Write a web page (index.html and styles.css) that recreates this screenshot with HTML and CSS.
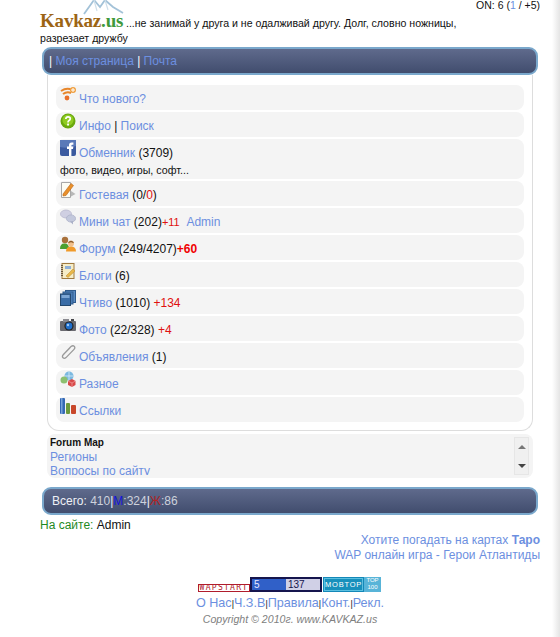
FILE: index.html
```html
<!DOCTYPE html>
<html lang="ru">
<head>
  <meta charset="UTF-8" />
  <title>Kavkaz.us</title>
  <link rel="stylesheet" href="styles.css">
</head>
<body>

  <div class="online-top">ON: 6 (<a href="#">1</a> / +5)</div>

  <div class="quote">
    <span class="logo">
      <svg class="logo-peaks" width="42" height="16" viewBox="0 0 42 16">
        <path d="M1 15 L11 1 L17 8 L22 1 L30 8 L40 14" fill="none" stroke="#a3c2d8" stroke-width="1.8"/>
        <path d="M11 1 L14 12 M22 1 L25 11" fill="none" stroke="#cfdfea" stroke-width="1.2"/>
      </svg>
      <span class="logo-name">Kavkaz</span><span class="logo-zone">.us</span>
    </span>
    ...не занимай у друга и не одалживай другу. Долг, словно ножницы,<br>
    разрезает дружбу
  </div>

  <div class="head-bar">| <a href="#">Моя страница</a> | <a href="#">Почта</a></div>

  <div class="menu-box">
    <div class="menu-row">
      <svg class="icon" viewBox="0 0 16 16">
        <path d="M1 5 Q7 1 12 4" fill="none" stroke="#e8862a" stroke-width="2"/>
        <path d="M3 8 Q7 5 11 7" fill="none" stroke="#e8862a" stroke-width="2"/>
        <circle cx="7" cy="12" r="2.4" fill="#e8702a"/>
        <circle cx="13" cy="4" r="3" fill="#f0a040"/>
        <path d="M11 4 H15 M13 2 V6" stroke="#fff" stroke-width="1"/>
      </svg>
      <a href="#">Что нового?</a>
    </div>
    <div class="menu-row">
      <svg class="icon" viewBox="0 0 16 16">
        <circle cx="8" cy="8" r="7.5" fill="#6aa80e"/>
        <circle cx="8" cy="7" r="5.6" fill="#8fcb22"/>
        <path d="M5.8 6 Q6 3.8 8 3.8 Q10.3 3.8 10.3 5.8 Q10.3 7 8.8 7.7 Q8 8.2 8 9.4" fill="none" stroke="#fff" stroke-width="1.7"/>
        <rect x="7.1" y="10.6" width="1.9" height="1.9" fill="#fff"/>
      </svg>
      <a href="#">Инфо</a> | <a href="#">Поиск</a>
    </div>
    <div class="menu-row">
      <svg class="icon" viewBox="0 0 16 16">
        <rect width="16" height="16" rx="2" fill="#3b5a9f"/>
        <path d="M0 0 H16 V6 Q8 9 0 7 Z" fill="#5a79b8"/>
        <path d="M9 16 V9 H7 V6.6 H9 V5 Q9 2.4 11.6 2.4 H13.4 V4.8 H12.2 Q11.4 4.8 11.4 5.6 V6.6 H13.4 L13 9 H11.4 V16 Z" fill="#fff"/>
      </svg>
      <a href="#">Обменник</a> (3709)
      <div class="row-note">фото, видео, игры, софт...</div>
    </div>
    <div class="menu-row">
      <svg class="icon" viewBox="0 0 16 16">
        <path d="M1.5 .5 H10.5 V15.5 H1.5 Z" fill="#fdfdf4" stroke="#a8a8a8"/>
        <path d="M3 12 L11 1.5 L13.5 3.5 L6 13.5 L3 14 Z" fill="#e9902a" stroke="#b8651a" stroke-width=".6"/>
        <path d="M11 9 L15.5 12 L11 14.5 Z" fill="#b8b8b8"/>
      </svg>
      <a href="#">Гостевая</a> (0/<span class="red">0</span>)
    </div>
    <div class="menu-row">
      <svg class="icon" viewBox="0 0 16 16">
        <ellipse cx="6" cy="5" rx="5.5" ry="4" fill="#cfcfe2" stroke="#b4b4cc" stroke-width=".7"/>
        <ellipse cx="11" cy="9.5" rx="4.6" ry="3.6" fill="#c3c8dc" stroke="#a9aec6" stroke-width=".7"/>
        <path d="M10 12.5 L13 15.5 L13 12 Z" fill="#aab0c8"/>
      </svg>
      <a href="#">Мини чат</a> (202)<span class="plus-small">+11</span>&nbsp; <a href="#">Admin</a>
    </div>
    <div class="menu-row">
      <svg class="icon" viewBox="0 0 16 16">
        <circle cx="5" cy="4" r="3.2" fill="#a8703a"/>
        <path d="M0 13 Q0 7 5 7.5 Q9 7.5 9 13 Z" fill="#4aa030"/>
        <circle cx="11" cy="7.5" r="3" fill="#f2c08a"/>
        <path d="M8 6.5 Q11 3 14 6.5 L13 7 Q11 5.5 9 7 Z" fill="#8a5a28"/>
        <path d="M6 15.5 Q6 10.5 11 10.5 Q16 10.5 16 15.5 Z" fill="#f09a2a"/>
      </svg>
      <a href="#">Форум</a> (249/4207)<span class="plus-bold">+60</span>
    </div>
    <div class="menu-row">
      <svg class="icon" viewBox="0 0 16 16">
        <rect x="2" y=".5" width="12" height="15" fill="#f6edc8" stroke="#a07a40"/>
        <path d="M2 2 V14" stroke="#6a5a40" stroke-width="2" stroke-dasharray="1 1"/>
        <rect x="5" y="3" width="6" height="3" fill="#8fb0d8"/>
        <path d="M6 13 L13 6 L15 8 L8 14.5 Z" fill="#e9b84a" stroke="#b8862a" stroke-width=".5"/>
      </svg>
      <a href="#">Блоги</a> (6)
    </div>
    <div class="menu-row">
      <svg class="icon" viewBox="0 0 16 16">
        <rect x="5.5" y=".5" width="10" height="12" fill="#5b8cc4" stroke="#2f5a8c"/>
        <rect x="3" y="2" width="10" height="12" fill="#4a7cb6" stroke="#2f5a8c"/>
        <rect x=".5" y="4" width="10" height="11.5" fill="#3a6ca6" stroke="#24486f"/>
        <rect x="1.5" y="5" width="8" height="3" fill="#7ba5d4"/>
      </svg>
      <a href="#">Чтиво</a> (1010) <span class="plus">+134</span>
    </div>
    <div class="menu-row">
      <svg class="icon" viewBox="0 0 16 16">
        <rect x="0" y="4" width="16" height="10" rx="1" fill="#6a6a70"/>
        <rect x="3" y="2" width="6" height="3" fill="#8a8a90"/>
        <rect x="11" y="2" width="3" height="2" fill="#45454a"/>
        <circle cx="9" cy="9" r="4.6" fill="#222"/>
        <circle cx="9" cy="9" r="3.4" fill="#1f6ecb"/>
        <circle cx="8" cy="8" r="1.2" fill="#9cc8f5"/>
      </svg>
      <a href="#">Фото</a> (22/328) <span class="plus">+4</span>
    </div>
    <div class="menu-row">
      <svg class="icon" viewBox="0 0 16 16">
        <path d="M3 11 L11 2.5 Q13 1 14.3 2.4 Q15.5 3.8 14 5.4 L6 13.6 Q4.4 15 3 13.8 Q1.8 12.4 3.2 10.8 L10 3.8" fill="none" stroke="#9a9a9a" stroke-width="1.3"/>
      </svg>
      <a href="#">Объявления</a> (1)
    </div>
    <div class="menu-row">
      <svg class="icon" viewBox="0 0 16 16">
        <circle cx="9" cy="5" r="4.5" fill="#7ab8e0"/>
        <path d="M9 1 V9 M5 5 H13" stroke="#d8ecf8" stroke-width=".8"/>
        <circle cx="4" cy="9" r="3.5" fill="#8cc070"/>
        <path d="M8 10 L12 8 L15.5 10 V14 L12 16 L8 14 Z" fill="#d84848"/>
        <path d="M8 10 L12 12 L15.5 10 M12 12 V16" fill="none" stroke="#f4b0b0" stroke-width=".6"/>
      </svg>
      <a href="#">Разное</a>
    </div>
    <div class="menu-row">
      <svg class="icon" viewBox="0 0 16 16">
        <rect x="0" y="0" width="5" height="16" rx="1" fill="#3568b4"/>
        <rect x="1" y="0" width="1.5" height="16" fill="#78a4dc"/>
        <rect x="6" y="5" width="4" height="11" rx="1" fill="#6c9a3c"/>
        <rect x="11" y="7" width="5" height="9" rx="1" fill="#c8472a"/>
      </svg>
      <a href="#">Ссылки</a>
    </div>
  </div>

  <div class="forum-map">
    <div class="map-list">
      <div class="map-title">Forum Map</div>
      <a href="#">Регионы</a>
      <a href="#">Вопросы по сайту</a>
    </div>
    <div class="scroll-track">
      <span class="arrow-up"></span>
      <span class="arrow-down"></span>
    </div>
  </div>

  <div class="head-bar total-bar">Всего: <span class="dim">410</span>|<span class="male">М</span><span class="dim">:324</span>|<span class="female">Ж</span><span class="dim">:86</span></div>

  <div class="on-site"><span class="green">На сайте:</span> Admin</div>

  <div class="promo">
    <a href="#">Хотите погадать на картах <b>Таро</b></a><br>
    <a href="#">WAP онлайн игра - Герои Атлантиды</a>
  </div>

  <div class="counters">
    <span class="cnt-wap">WAPSTART</span>
    <span class="cnt-blue"><span class="cnt-fill">5</span><span class="cnt-rest">137</span></span>
    <span class="cnt-top"><span class="cnt-name">MOBTOP</span><span class="cnt-num">TOP<br>100</span></span>
  </div>

  <div class="foot-links">
    <a href="#">О Нас</a><span class="sep">|</span><a href="#">Ч.З.В</a><span class="sep">|</span><a href="#">Правила</a><span class="sep">|</span><a href="#">Конт.</a><span class="sep">|</span><a href="#">Рекл.</a>
  </div>
  <div class="copyright">Copyright © 2010г. www.KAVKAZ.us</div>

</body>
</html>
```

FILE: styles.css
```css
body {
  margin: 0;
  padding: 0 20px 0 40px;
  background: #fff;
  color: #111;
  font-family: "Liberation Sans", Arial, sans-serif;
  font-size: 12px;
  line-height: 15px;
}

/* soft shade down the right edge of the window */
body::after {
  content: "";
  position: fixed;
  top: 0;
  right: 0;
  bottom: 0;
  width: 8px;
  background: linear-gradient(90deg, #fff, #e4e4e4);
}

a {
  color: #6c8fe0;
  text-decoration: none;
}

.online-top {
  text-align: right;
  height: 13px;
  font-size: 10.5px;
  line-height: 10px;
}

.quote {
  font-size: 10.6px;
  line-height: 15px;
}

/* Logo */
.logo {
  display: inline-block;
  position: relative;
  width: 83px;
  height: 16px;
  font-family: "Liberation Serif", serif;
  font-weight: bold;
  font-size: 19px;
  line-height: 16px;
  letter-spacing: -0.2px;
}
.logo-peaks {
  position: absolute;
  left: 43px;
  top: -14px;
}
.logo-name {
  color: #9c6414;
}
.logo-zone {
  color: #3f9a3c;
}

/* Blue bars */
.head-bar {
  margin: 1px 2px 0;
  height: 24px;
  padding-left: 5px;
  border: 2px solid #7aa8cc;
  border-radius: 9px;
  background: linear-gradient(#5f6a8c, #414d6e);
  color: #fff;
  line-height: 24px;
}

.menu-box {
  margin: 0 7px;
  padding: 10px 8px 8px;
  border: 1px solid #ddd;
  border-top: none;
  border-radius: 0 0 12px 12px;
}

.menu-row {
  margin-bottom: 2px;
  padding: 7px 4px 3px;
  background: #f4f4f4;
  border-radius: 8px;
}
.menu-row:last-child {
  margin-bottom: 0;
}

.icon {
  float: left;
  width: 16px;
  height: 16px;
  margin: -6px 3px 0 0;
}

.row-note {
  font-size: 10.7px;
  line-height: 14px;
  margin-top: 2px;
  margin-bottom: -1px;
}

.red { color: #e01010; }
.plus { color: #e01010; }
.plus-small { color: #e01010; font-size: 11px; }
.plus-bold { color: #f00000; font-weight: bold; }

/* Forum map */
.forum-map {
  display: flex;
  height: 44px;
  margin: 3px 7px 0;
  padding: 0 4px 0 3px;
  background: #f4f4f4;
  border-radius: 8px;
}
.map-list {
  flex: 1;
  padding-top: 3px;
  height: 38px;
  overflow: hidden;
}
.map-list a {
  display: block;
  line-height: 14px;
}
.map-title {
  font-size: 10px;
  font-weight: bold;
  line-height: 12px;
  margin-bottom: 1px;
}
.scroll-track {
  display: flex;
  flex-direction: column;
  justify-content: space-between;
  align-items: center;
  width: 15px;
  height: 38px;
  margin-top: 3px;
  padding: 7px 0 6px;
  box-sizing: border-box;
  background: #f0f0f0;
  border: 1px solid #e6e6e6;
}
.arrow-up {
  border: 4px solid transparent;
  border-top: none;
  border-bottom: 4px solid #777;
}
.arrow-down {
  border: 4px solid transparent;
  border-bottom: none;
  border-top: 4px solid #444;
}

.total-bar {
  margin-top: 9px;
  padding-left: 8px;
  color: #eef0f6;
}
.dim { color: #cdd1dc; }
.male { color: #1414d8; }
.female { color: #b02424; }

.on-site {
  margin-top: 3px;
}
.green { color: #1f8a1f; }

.promo {
  text-align: right;
}

/* Counters */
.counters {
  display: flex;
  justify-content: center;
  align-items: flex-end;
  margin-top: 14px;
  padding-right: 1px;
  height: 15px;
  font-size: 10px;
  line-height: 10px;
}
.cnt-wap {
  box-sizing: border-box;
  width: 52px;
  height: 8px;
  border: 1px solid #b01c2c;
  color: #b01c2c;
  font-family: "DejaVu Sans Mono", monospace;
  font-size: 8px;
  line-height: 6px;
  letter-spacing: 1.3px;
  text-align: center;
  overflow: hidden;
}
.cnt-blue {
  box-sizing: border-box;
  display: flex;
  width: 72px;
  height: 15px;
  border: 2px solid #15154d;
  color: #15154d;
  line-height: 11px;
}
.cnt-fill {
  width: 32px;
  padding-left: 2px;
  background: #3060c8;
  color: #e8e8ff;
}
.cnt-rest {
  flex: 1;
  padding-left: 2px;
  background: #d0d0e6;
}
.cnt-top {
  display: flex;
  width: 58px;
  height: 15px;
  margin-left: 1px;
  background: #1488b8;
  color: #fff;
}
.cnt-name {
  margin: 1px;
  width: 39px;
  background: #1890bc;
  border: 1px solid #5cc0e0;
  box-sizing: border-box;
  font-size: 7.5px;
  line-height: 11px;
  letter-spacing: 0.8px;
  text-align: center;
}
.cnt-num {
  flex: 1;
  background: #58b4d8;
  font-size: 6px;
  line-height: 7px;
  text-align: center;
}

.foot-links {
  margin-top: 3px;
  font-size: 12.6px;
  line-height: 16px;
  text-align: center;
}
.sep {
  font-size: 9px;
}
.copyright {
  color: #808080;
  font-size: 10.6px;
  font-style: italic;
  line-height: 14px;
  text-align: center;
}
```
